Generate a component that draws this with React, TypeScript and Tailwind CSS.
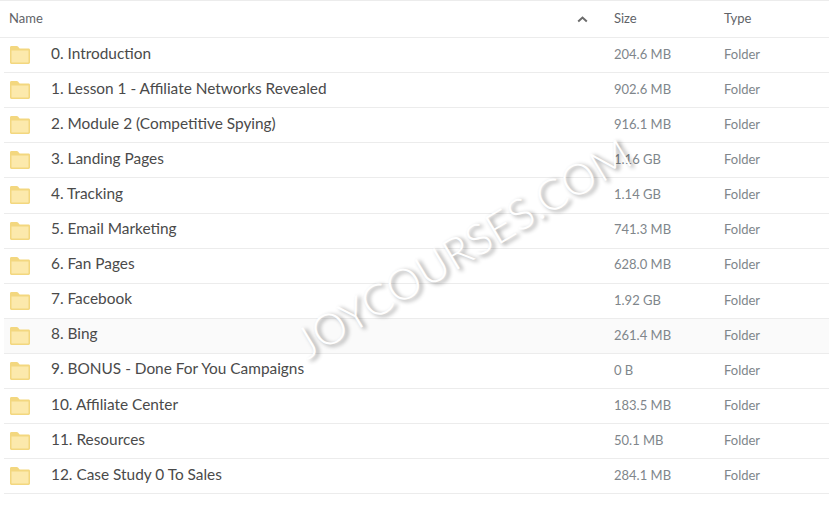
import React from 'react';

const rows = [
  ['0. Introduction', '204.6 MB'],
  ['1. Lesson 1 - Affiliate Networks Revealed', '902.6 MB'],
  ['2. Module 2 (Competitive Spying)', '916.1 MB'],
  ['3. Landing Pages', '1.16 GB'],
  ['4. Tracking', '1.14 GB'],
  ['5. Email Marketing', '741.3 MB'],
  ['6. Fan Pages', '628.0 MB'],
  ['7. Facebook', '1.92 GB'],
  ['8. Bing', '261.4 MB'],
  ['9. BONUS - Done For You Campaigns', '0 B'],
  ['10. Affiliate Center', '183.5 MB'],
  ['11. Resources', '50.1 MB'],
  ['12. Case Study 0 To Sales', '284.1 MB'],
];

function FolderIcon() {
  return (
    <svg width="22" height="20" viewBox="0 0 22 20" className="shrink-0">
      <path d="M1 2.4C1 1.6 1.6 1 2.4 1h5.4c.5 0 .9.2 1.2.6L10.6 3.5h9c.8 0 1.4.6 1.4 1.4v12.7c0 .8-.6 1.4-1.4 1.4H2.4c-.8 0-1.4-.6-1.4-1.4V2.4z" fill="#f3d77f" />
      <path d="M2.5 5.5h17v11.6c0 .3-.2.5-.5.5H3c-.3 0-.5-.2-.5-.5V5.5z" fill="#fce9ac" />
    </svg>
  );
}

export default function App() {
  return (
    <div className="relative w-[829px] h-[511px] overflow-hidden bg-white font-['Lato','Noto_Sans',sans-serif]">
      <div className="h-[38px] flex items-center border-t border-b border-[#ececec] text-[13px] text-[#5f6368]">
        <div className="w-[614px] pl-[9px] flex items-center justify-between pr-[26px]">
          <span>Name</span>
          <svg width="11" height="7" viewBox="0 0 11 7">
            <path d="M1.2 5.6 5.5 1.6l4.3 4" fill="none" stroke="#6b6b6b" strokeWidth="2" />
          </svg>
        </div>
        <div className="w-[110px]">Size</div>
        <div>Type</div>
      </div>
      <div className="pl-1">
        {rows.map(([name, size], i) => (
          <div
            key={name}
            className={`h-[35.12px] flex items-center border-b border-[#ececec] ${i === 8 ? 'bg-[#fafafa]' : ''}`}
          >
            <div className="w-[610px] flex items-center pl-[5px]">
              <FolderIcon />
              <span className="ml-[20px] mb-[4px] text-[15.4px] text-[#4a4a4a]">{name}</span>
            </div>
            <div className="w-[110px] mb-[1px] text-[13px] text-[#80868b]">{size}</div>
            <div className="mb-[1px] text-[13px] text-[#80868b]">Folder</div>
          </div>
        ))}
      </div>
      {/* watermark */}
      <div className="absolute left-[463px] top-[248px] -translate-x-1/2 -translate-y-1/2 -rotate-[31deg] whitespace-nowrap text-[43px] tracking-[0.5px] font-light text-white [text-shadow:2px_3px_4px_rgba(0,0,0,0.45)]">
        JOYCOURSES.COM
      </div>
    </div>
  );
}
